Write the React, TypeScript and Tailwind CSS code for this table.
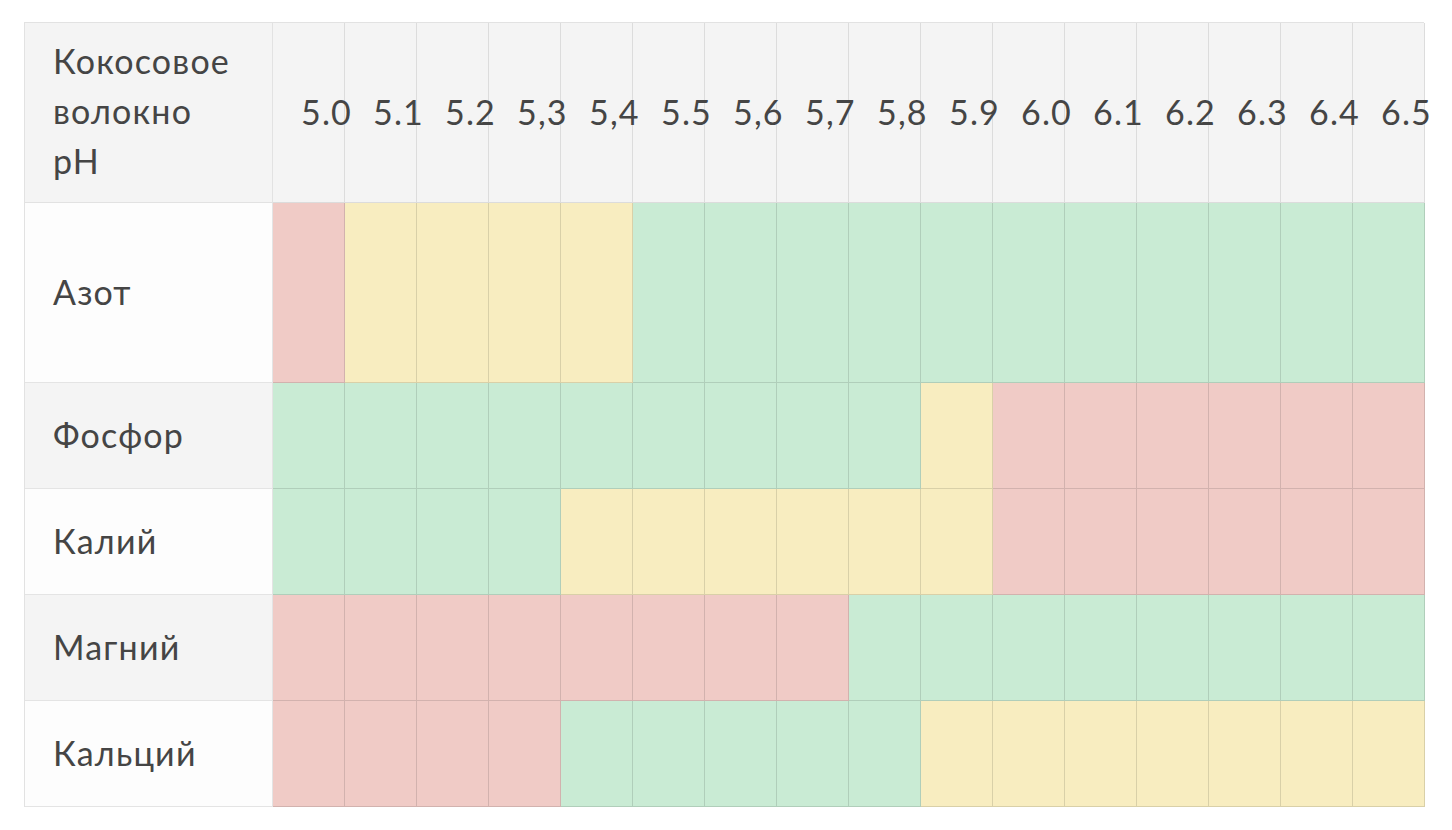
import React from 'react';

type Level = 'r' | 'y' | 'g';

const PH = ['5.0', '5.1', '5.2', '5,3', '5,4', '5.5', '5,6', '5,7', '5,8', '5.9', '6.0', '6.1', '6.2', '6.3', '6.4', '6.5'];

const ROWS: { name: string; cells: string; tall?: boolean; shaded?: boolean }[] = [
  { name: 'Азот', cells: 'ryyyyggggggggggg', tall: true },
  { name: 'Фосфор', cells: 'gggggggggyrrrrrr', shaded: true },
  { name: 'Калий', cells: 'ggggyyyyyyrrrrrr' },
  { name: 'Магний', cells: 'rrrrrrrrgggggggg', shaded: true },
  { name: 'Кальций', cells: 'rrrrgggggyyyyyyy' },
];

const fill: Record<Level, string> = {
  r: 'bg-[#f0cbc6]',
  y: 'bg-[#f8edc0]',
  g: 'bg-[#c9ebd4]',
};

export default function App() {
  return (
    <div className="min-h-[830px] bg-white pl-6 pt-[22px] font-['Lato',sans-serif] text-[34px] tracking-[0.035em] text-[#454545]">
      <div className="grid w-[1400px] grid-cols-[248px_repeat(16,72px)] border-l border-t border-[#e2e2e2]">
        {/* header */}
        <div className="flex h-[180px] items-center border-b border-r border-[#e2e2e2] bg-[#f4f4f4] pb-[3px] pl-7 leading-[50px]">
          <div>
            Кокосовое
            <br />
            волокно
            <br />
            pH
          </div>
        </div>
        {PH.map((v) => (
          <div
            key={v}
            className="flex h-[180px] items-center overflow-visible whitespace-nowrap border-b border-r border-[#dcdcdc] bg-[#f4f4f4] pb-[3px] pl-7"
          >
            <span className="relative z-10">{v}</span>
          </div>
        ))}

        {ROWS.map((row) => (
          <React.Fragment key={row.name}>
            <div
              className={`flex items-center border-b border-r border-[#e4e4e4] pb-[3px] pl-7 ${
                row.tall ? 'h-[180px]' : 'h-[106px]'
              } ${row.shaded ? 'bg-[#f4f4f4]' : 'bg-[#fdfdfd]'}`}
            >
              {row.name}
            </div>
            {row.cells.split('').map((c, i) => (
              <div
                key={i}
                className={`border-b border-r border-black/[0.12] ${row.tall ? 'h-[180px]' : 'h-[106px]'} ${fill[c as Level]}`}
              />
            ))}
          </React.Fragment>
        ))}
      </div>
    </div>
  );
}
